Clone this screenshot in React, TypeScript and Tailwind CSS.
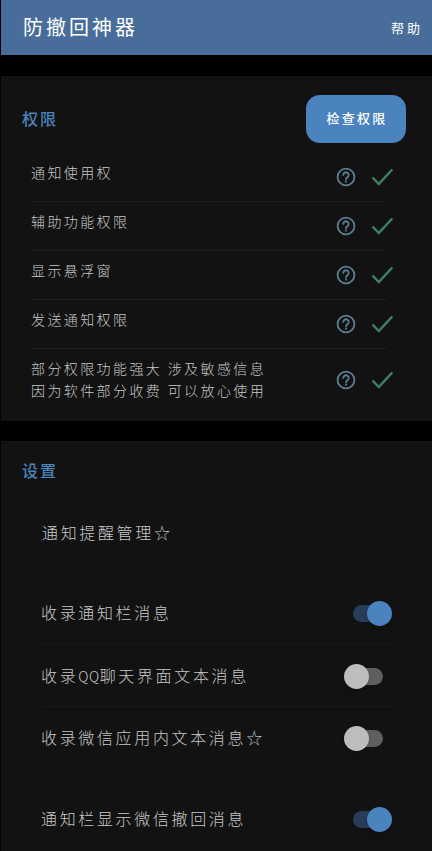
import React from "react";

const cjk = "font-['Noto_Sans_CJK_SC','Noto_Sans_CJK_JP',sans-serif]";

function Help() {
  return (
    <svg width="24" height="24" viewBox="0 0 24 24" fill="none" className="text-[#5a7f95]">
      <circle cx="12" cy="12" r="8.4" stroke="currentColor" strokeWidth="1.8" />
      <path d="M9.3 9.9a2.7 2.7 0 1 1 4.2 2.3c-.9.6-1.5 1.1-1.5 2.1" stroke="currentColor" strokeWidth="1.8" strokeLinecap="round" fill="none" />
      <circle cx="12" cy="16.6" r="1.05" fill="currentColor" />
    </svg>
  );
}

function Check() {
  return (
    <svg width="24" height="20" viewBox="0 0 24 20" fill="none" className="text-[#3f8063]">
      <path d="M2.5 10.5 L8.8 17 L22.3 2.5" stroke="currentColor" strokeWidth="2.5" />
    </svg>
  );
}

function PermRow({ text, last }: { text: React.ReactNode; last?: boolean }) {
  return (
    <div className={`flex items-center justify-between mr-[19px] ${last ? "h-[64px] mt-[-1px]" : "h-[49px] border-b border-[#1e1e1e]"}`}>
      <div className={`text-[14px] leading-[22px] tracking-[2.4px] text-[#c8c8c8] font-light ${last ? "pb-[2px]" : "pb-[10px]"}`}>{text}</div>
      <div className="flex items-center gap-[12px] mr-[-7px]">
        <Help />
        <Check />
      </div>
    </div>
  );
}

function Toggle({ on }: { on: boolean }) {
  return (
    <div className="relative w-[39px] h-[17px]">
      {on ? (
        <>
          <div className="absolute left-0 top-0 w-[34px] h-[17px] rounded-full bg-[#263e57]" />
          <div className="absolute left-[14px] top-[-4px] w-[25px] h-[25px] rounded-full bg-[#4a83bd] shadow-md" />
        </>
      ) : (
        <>
          <div className="absolute left-[5px] top-0 w-[34px] h-[17px] rounded-full bg-[#5f5f5f]" />
          <div className="absolute left-0 top-[-4px] w-[25px] h-[25px] rounded-full bg-[#bdbdbd] shadow-md" />
        </>
      )}
    </div>
  );
}

function SetRow({ text, on, border, cls }: { text: React.ReactNode; on: boolean; border?: boolean; cls: string }) {
  return (
    <div className={`flex items-center justify-between ${cls} ${border ? "border-b border-[#1a1a1a]" : ""}`}>
      <div className="text-[16px] tracking-[2.65px] text-[#c8c8c8] font-light pb-[1px]">{text}</div>
      <div className={on ? "mr-[5px] mt-[2px]" : "mr-[14px] mt-[2px]"}>
        <Toggle on={on} />
      </div>
    </div>
  );
}

export default function App() {
  return (
    <div className={`w-[432px] h-[851px] overflow-hidden bg-black pl-px ${cjk}`}>
      <div className="h-[55px] bg-[#486d9b] flex items-center justify-between pl-[22px] pr-[9px]">
        <div className="text-[20px] tracking-[3px] text-white pb-[2px]">防撤回神器</div>
        <div className="text-[13px] tracking-[3px] text-white">帮助</div>
      </div>
      <div className="mt-[21px] h-[345px] bg-[#121212] pl-[21px] pt-[19px] pr-[26px]">
        <div className="flex items-center justify-between h-[48px]">
          <div className="text-[16px] tracking-[2px] text-[#4a83bd] font-medium pb-[3px]">权限</div>
          <button className="w-[100px] h-[48px] rounded-[14px] bg-[#4a83bd] text-white text-[13px] tracking-[2.3px] font-medium pb-[3px] pl-[2px]">检查权限</button>
        </div>
        <div className="mt-[10px] pl-[9px]">
          <PermRow text="通知使用权" />
          <PermRow text="辅助功能权限" />
          <PermRow text="显示悬浮窗" />
          <PermRow text="发送通知权限" />
          <PermRow last text={<>部分权限功能强大 涉及敏感信息<br />因为软件部分收费 可以放心使用</>} />
        </div>
      </div>
      <div className="mt-[20px] h-[410px] bg-[#121212] pt-[17px] pl-[21px] pr-[35px]">
        <div className="text-[16px] tracking-[2px] text-[#4a83bd] font-medium">设置</div>
        <div className="pl-[19px]">
          <div className="mt-[38px] text-[16px] tracking-[2.65px] text-[#c8c8c8] font-light pl-px">通知提醒管理☆</div>
          <SetRow cls="mt-[38px] h-[62px]" text="收录通知栏消息" on border />
          <SetRow cls="h-[63px]" text={<>收录<span className="text-[14px] tracking-[0.5px]">QQ</span>聊天界面文本消息</>} on={false} border />
          <SetRow cls="h-[60px]" text="收录微信应用内文本消息☆" on={false} />
          <SetRow cls="mt-[21px] h-[60px]" text="通知栏显示微信撤回消息" on />
        </div>
      </div>
    </div>
  );
}
